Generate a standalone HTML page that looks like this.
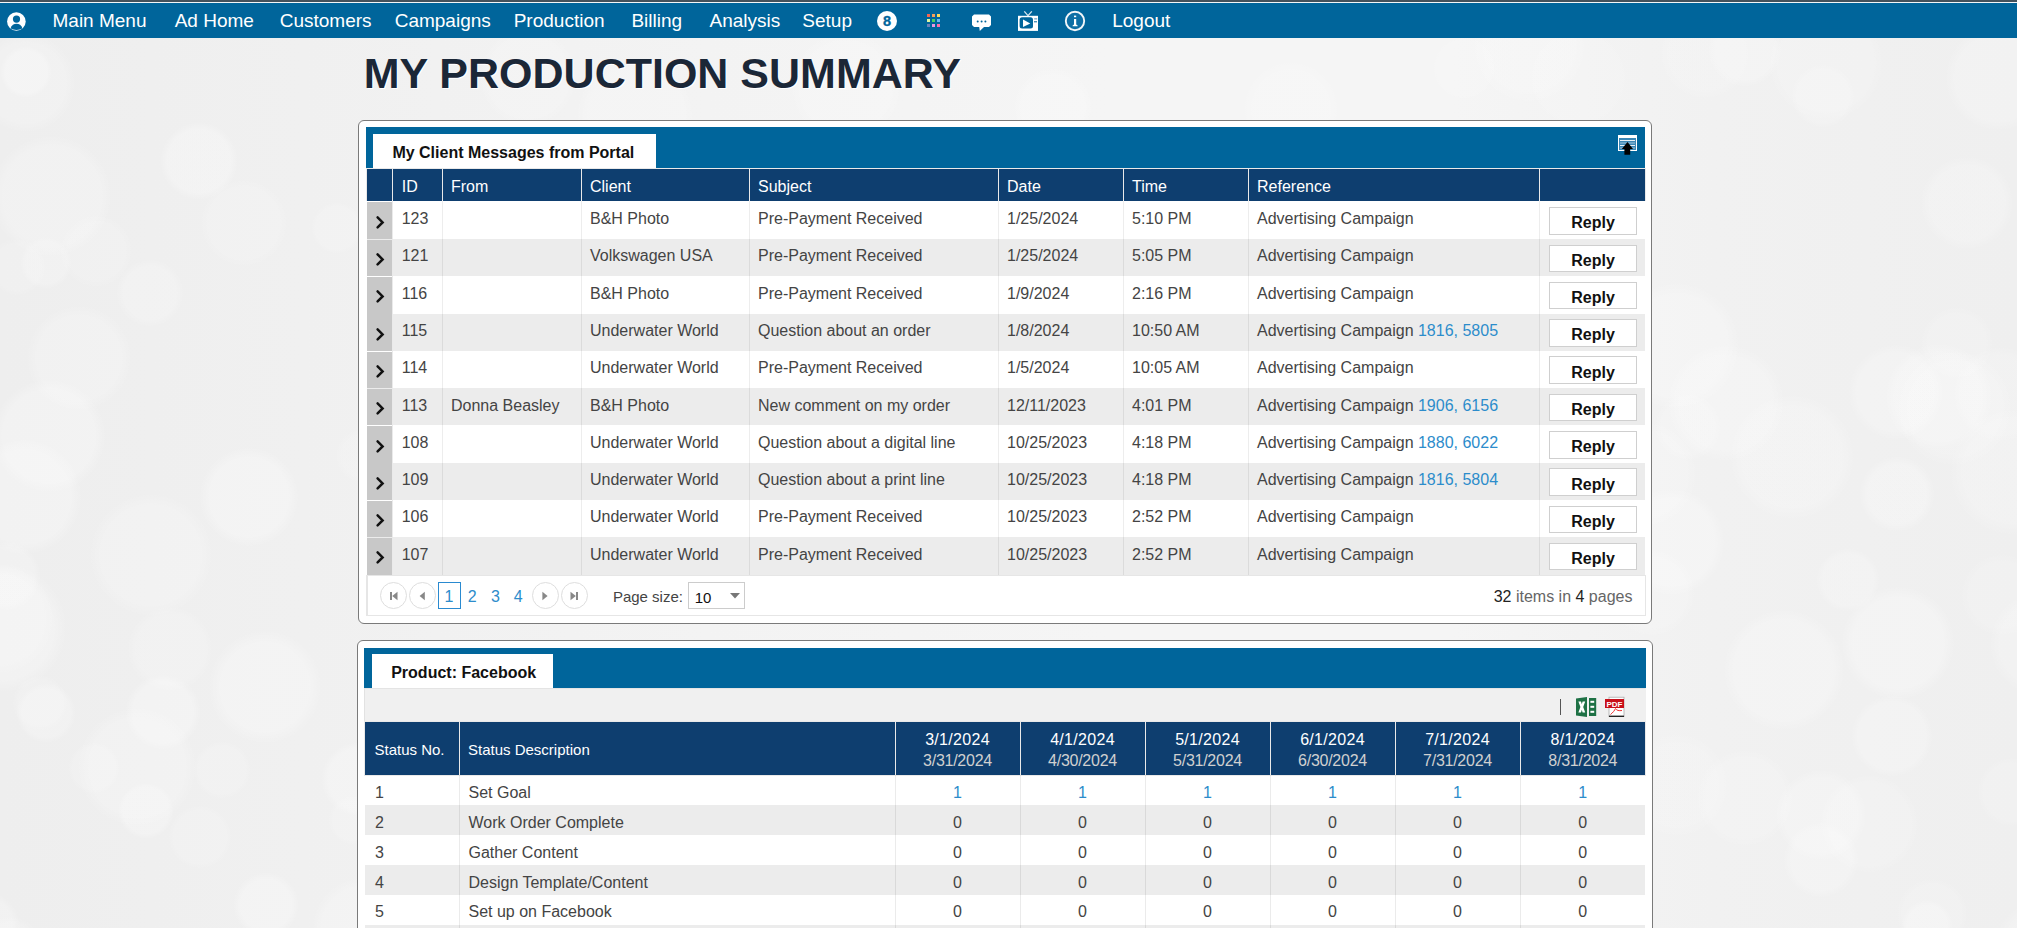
<!DOCTYPE html>
<html><head><meta charset="utf-8"><title>My Production Summary</title>
<style>
html,body{margin:0;padding:0;}
body{width:2017px;height:928px;overflow:hidden;position:relative;font-family:'Liberation Sans', sans-serif;
background-color:#efefef;
background-image:radial-gradient(circle at 151px 555px, rgba(255,255,255,0.19) 0, rgba(255,255,255,0.19) 50px, rgba(255,255,255,0) 62px),
radial-gradient(circle at 1848px 580px, rgba(255,255,255,0.19) 0, rgba(255,255,255,0.19) 26px, rgba(255,255,255,0) 32px),
radial-gradient(circle at 222px 770px, rgba(255,255,255,0.16) 0, rgba(255,255,255,0.16) 23px, rgba(255,255,255,0) 29px),
radial-gradient(circle at 1677px 785px, rgba(255,255,255,0.13) 0, rgba(255,255,255,0.13) 42px, rgba(255,255,255,0) 53px),
radial-gradient(circle at 363px 928px, rgba(255,255,255,0.21) 0, rgba(255,255,255,0.21) 41px, rgba(255,255,255,0) 51px),
radial-gradient(circle at 1705px 54px, rgba(255,255,255,0.13) 0, rgba(255,255,255,0.13) 37px, rgba(255,255,255,0) 46px),
radial-gradient(circle at 46px 263px, rgba(255,255,255,0.18) 0, rgba(255,255,255,0.18) 21px, rgba(255,255,255,0) 26px),
radial-gradient(circle at 1821px 815px, rgba(255,255,255,0.21) 0, rgba(255,255,255,0.21) 37px, rgba(255,255,255,0) 46px),
radial-gradient(circle at 170px 649px, rgba(255,255,255,0.16) 0, rgba(255,255,255,0.16) 35px, rgba(255,255,255,0) 43px),
radial-gradient(circle at 2049px 956px, rgba(255,255,255,0.22) 0, rgba(255,255,255,0.22) 47px, rgba(255,255,255,0) 59px),
radial-gradient(circle at 96px 251px, rgba(255,255,255,0.13) 0, rgba(255,255,255,0.13) 29px, rgba(255,255,255,0) 37px),
radial-gradient(circle at 1954px 408px, rgba(255,255,255,0.17) 0, rgba(255,255,255,0.17) 47px, rgba(255,255,255,0) 59px),
radial-gradient(circle at 353px 820px, rgba(255,255,255,0.15) 0, rgba(255,255,255,0.15) 20px, rgba(255,255,255,0) 25px),
radial-gradient(circle at 2013px 472px, rgba(255,255,255,0.18) 0, rgba(255,255,255,0.18) 51px, rgba(255,255,255,0) 64px),
radial-gradient(circle at -1px 619px, rgba(255,255,255,0.16) 0, rgba(255,255,255,0.16) 45px, rgba(255,255,255,0) 56px),
radial-gradient(circle at 1676px 346px, rgba(255,255,255,0.23) 0, rgba(255,255,255,0.23) 51px, rgba(255,255,255,0) 64px),
radial-gradient(circle at 17px 267px, rgba(255,255,255,0.13) 0, rgba(255,255,255,0.13) 23px, rgba(255,255,255,0) 29px),
radial-gradient(circle at 1967px 203px, rgba(255,255,255,0.18) 0, rgba(255,255,255,0.18) 38px, rgba(255,255,255,0) 47px),
radial-gradient(circle at 46px 713px, rgba(255,255,255,0.21) 0, rgba(255,255,255,0.21) 24px, rgba(255,255,255,0) 30px),
radial-gradient(circle at 1688px 427px, rgba(255,255,255,0.16) 0, rgba(255,255,255,0.16) 27px, rgba(255,255,255,0) 34px),
radial-gradient(circle at 358px 779px, rgba(255,255,255,0.24) 0, rgba(255,255,255,0.24) 30px, rgba(255,255,255,0) 37px),
radial-gradient(circle at 1726px 403px, rgba(255,255,255,0.21) 0, rgba(255,255,255,0.21) 47px, rgba(255,255,255,0) 59px),
radial-gradient(circle at 10px 950px, rgba(255,255,255,0.16) 0, rgba(255,255,255,0.16) 27px, rgba(255,255,255,0) 34px),
radial-gradient(circle at 1957px 343px, rgba(255,255,255,0.13) 0, rgba(255,255,255,0.13) 29px, rgba(255,255,255,0) 37px),
radial-gradient(circle at 6px 576px, rgba(255,255,255,0.20) 0, rgba(255,255,255,0.20) 28px, rgba(255,255,255,0) 35px),
radial-gradient(circle at 1792px 457px, rgba(255,255,255,0.19) 0, rgba(255,255,255,0.19) 51px, rgba(255,255,255,0) 63px),
radial-gradient(circle at 200px 837px, rgba(255,255,255,0.14) 0, rgba(255,255,255,0.14) 26px, rgba(255,255,255,0) 32px),
radial-gradient(circle at 2012px 792px, rgba(255,255,255,0.15) 0, rgba(255,255,255,0.15) 28px, rgba(255,255,255,0) 35px),
radial-gradient(circle at 266px 905px, rgba(255,255,255,0.25) 0, rgba(255,255,255,0.25) 26px, rgba(255,255,255,0) 33px),
radial-gradient(circle at 2002px 595px, rgba(255,255,255,0.13) 0, rgba(255,255,255,0.13) 33px, rgba(255,255,255,0) 42px),
radial-gradient(circle at -15px 926px, rgba(255,255,255,0.22) 0, rgba(255,255,255,0.22) 28px, rgba(255,255,255,0) 35px),
radial-gradient(circle at 1745px 798px, rgba(255,255,255,0.16) 0, rgba(255,255,255,0.16) 39px, rgba(255,255,255,0) 49px),
radial-gradient(circle at 40px 703px, rgba(255,255,255,0.15) 0, rgba(255,255,255,0.15) 22px, rgba(255,255,255,0) 28px),
radial-gradient(circle at 1869px 824px, rgba(255,255,255,0.16) 0, rgba(255,255,255,0.16) 40px, rgba(255,255,255,0) 50px),
radial-gradient(circle at 337px 228px, rgba(255,255,255,0.16) 0, rgba(255,255,255,0.16) 21px, rgba(255,255,255,0) 26px),
radial-gradient(circle at 1823px 96px, rgba(255,255,255,0.17) 0, rgba(255,255,255,0.17) 26px, rgba(255,255,255,0) 32px),
radial-gradient(circle at 199px 161px, rgba(255,255,255,0.24) 0, rgba(255,255,255,0.24) 32px, rgba(255,255,255,0) 39px),
radial-gradient(circle at 2042px 644px, rgba(255,255,255,0.20) 0, rgba(255,255,255,0.20) 42px, rgba(255,255,255,0) 53px),
radial-gradient(circle at 26px 72px, rgba(255,255,255,0.25) 0, rgba(255,255,255,0.25) 21px, rgba(255,255,255,0) 26px),
radial-gradient(circle at 1927px 926px, rgba(255,255,255,0.21) 0, rgba(255,255,255,0.21) 21px, rgba(255,255,255,0) 26px),
radial-gradient(circle at 163px 712px, rgba(255,255,255,0.26) 0, rgba(255,255,255,0.26) 30px, rgba(255,255,255,0) 38px),
radial-gradient(circle at 1671px 542px, rgba(255,255,255,0.25) 0, rgba(255,255,255,0.25) 44px, rgba(255,255,255,0) 54px),
radial-gradient(circle at 265px 687px, rgba(255,255,255,0.25) 0, rgba(255,255,255,0.25) 45px, rgba(255,255,255,0) 57px),
radial-gradient(circle at 1784px 670px, rgba(255,255,255,0.24) 0, rgba(255,255,255,0.24) 49px, rgba(255,255,255,0) 61px),
radial-gradient(circle at 137px 767px, rgba(255,255,255,0.20) 0, rgba(255,255,255,0.20) 48px, rgba(255,255,255,0) 60px),
radial-gradient(circle at 1896px 392px, rgba(255,255,255,0.21) 0, rgba(255,255,255,0.21) 39px, rgba(255,255,255,0) 48px),
radial-gradient(circle at 2px 628px, rgba(255,255,255,0.24) 0, rgba(255,255,255,0.24) 52px, rgba(255,255,255,0) 65px),
radial-gradient(circle at 1939px 397px, rgba(255,255,255,0.20) 0, rgba(255,255,255,0.20) 44px, rgba(255,255,255,0) 54px),
radial-gradient(circle at 146px 811px, rgba(255,255,255,0.23) 0, rgba(255,255,255,0.23) 23px, rgba(255,255,255,0) 28px),
radial-gradient(circle at 1652px 593px, rgba(255,255,255,0.15) 0, rgba(255,255,255,0.15) 35px, rgba(255,255,255,0) 44px),
radial-gradient(circle at 249px 497px, rgba(255,255,255,0.25) 0, rgba(255,255,255,0.25) 40px, rgba(255,255,255,0) 50px),
radial-gradient(circle at 1745px 50px, rgba(255,255,255,0.21) 0, rgba(255,255,255,0.21) 30px, rgba(255,255,255,0) 37px),
radial-gradient(circle at 51px 196px, rgba(255,255,255,0.21) 0, rgba(255,255,255,0.21) 49px, rgba(255,255,255,0) 61px),
radial-gradient(circle at 1821px 860px, rgba(255,255,255,0.21) 0, rgba(255,255,255,0.21) 30px, rgba(255,255,255,0) 38px),
radial-gradient(circle at 49px 436px, rgba(255,255,255,0.25) 0, rgba(255,255,255,0.25) 46px, rgba(255,255,255,0) 57px),
radial-gradient(circle at 2001px 394px, rgba(255,255,255,0.16) 0, rgba(255,255,255,0.16) 39px, rgba(255,255,255,0) 48px),
radial-gradient(circle at 24px 497px, rgba(255,255,255,0.24) 0, rgba(255,255,255,0.24) 47px, rgba(255,255,255,0) 58px),
radial-gradient(circle at 1932px 914px, rgba(255,255,255,0.14) 0, rgba(255,255,255,0.14) 29px, rgba(255,255,255,0) 36px),
radial-gradient(circle at 150px 293px, rgba(255,255,255,0.18) 0, rgba(255,255,255,0.18) 27px, rgba(255,255,255,0) 34px),
radial-gradient(circle at 1897px 494px, rgba(255,255,255,0.24) 0, rgba(255,255,255,0.24) 30px, rgba(255,255,255,0) 38px),
radial-gradient(circle at 363px 456px, rgba(255,255,255,0.12) 0, rgba(255,255,255,0.12) 22px, rgba(255,255,255,0) 28px),
radial-gradient(circle at 1998px 78px, rgba(255,255,255,0.20) 0, rgba(255,255,255,0.20) 43px, rgba(255,255,255,0) 53px),
radial-gradient(circle at 94px 768px, rgba(255,255,255,0.14) 0, rgba(255,255,255,0.14) 21px, rgba(255,255,255,0) 26px),
radial-gradient(circle at 1826px 63px, rgba(255,255,255,0.15) 0, rgba(255,255,255,0.15) 47px, rgba(255,255,255,0) 58px),
radial-gradient(circle at 26px 83px, rgba(255,255,255,0.18) 0, rgba(255,255,255,0.18) 40px, rgba(255,255,255,0) 50px),
radial-gradient(circle at 1898px 643px, rgba(255,255,255,0.25) 0, rgba(255,255,255,0.25) 46px, rgba(255,255,255,0) 57px),
radial-gradient(circle at 244px 223px, rgba(255,255,255,0.15) 0, rgba(255,255,255,0.15) 35px, rgba(255,255,255,0) 44px),
radial-gradient(circle at 1644px 474px, rgba(255,255,255,0.15) 0, rgba(255,255,255,0.15) 43px, rgba(255,255,255,0) 54px),
radial-gradient(circle at 79px 358px, rgba(255,255,255,0.19) 0, rgba(255,255,255,0.19) 42px, rgba(255,255,255,0) 53px),
radial-gradient(circle at 1892px 736px, rgba(255,255,255,0.23) 0, rgba(255,255,255,0.23) 33px, rgba(255,255,255,0) 41px),
radial-gradient(circle at 1529px 46px, rgba(255,255,255,0.17) 0, rgba(255,255,255,0.17) 46px, rgba(255,255,255,0) 58px),
radial-gradient(circle at 528px 77px, rgba(255,255,255,0.19) 0, rgba(255,255,255,0.19) 39px, rgba(255,255,255,0) 49px),
radial-gradient(circle at 846px 87px, rgba(255,255,255,0.18) 0, rgba(255,255,255,0.18) 45px, rgba(255,255,255,0) 56px),
radial-gradient(circle at 1578px 78px, rgba(255,255,255,0.12) 0, rgba(255,255,255,0.12) 40px, rgba(255,255,255,0) 50px),
radial-gradient(circle at 1291px 109px, rgba(255,255,255,0.17) 0, rgba(255,255,255,0.17) 39px, rgba(255,255,255,0) 49px),
radial-gradient(circle at 635px 116px, rgba(255,255,255,0.20) 0, rgba(255,255,255,0.20) 48px, rgba(255,255,255,0) 59px),
radial-gradient(circle at 1053px 107px, rgba(255,255,255,0.19) 0, rgba(255,255,255,0.19) 32px, rgba(255,255,255,0) 40px),
radial-gradient(circle at 1464px 68px, rgba(255,255,255,0.14) 0, rgba(255,255,255,0.14) 26px, rgba(255,255,255,0) 32px),
linear-gradient(90deg, #eeeeee 0%, #f0f0f0 15%, #f3f3f3 35%, #f5f5f5 55%, #f5f5f5 72%, #f1f1f1 85%, #efefef 100%);
}
.t{position:absolute;white-space:pre;font-family:'Liberation Sans', sans-serif;}
.b{position:absolute;}
svg.b{overflow:visible}
</style></head><body>
<div class="b" style="left:0.0px;top:0.0px;width:2017.0px;height:2.0px;background:#44525c"></div>
<div class="b" style="left:0.0px;top:2.0px;width:2017.0px;height:1.0px;background:#f4f6f8"></div>
<div class="b" style="left:0.0px;top:3.0px;width:2017.0px;height:35.0px;background:#00659b"></div>
<svg class="b" style="left:6px;top:11px" width="21" height="21" viewBox="0 0 21 21">
<circle cx="10.4" cy="10.5" r="9.3" fill="#fff"/>
<circle cx="10.5" cy="8.1" r="3.6" fill="#00659b"/>
<path d="M4.6 17.2 C5.6 14.2 7.8 12.8 10.5 12.8 C13.2 12.8 15.4 14.2 16.4 17.2 C14.8 18.4 12.8 18.9 10.5 18.9 C8.2 18.9 6.2 18.4 4.6 17.2 Z" fill="#00659b"/>
</svg>
<div class="t" style="left:52.5px;top:11.0px;font-size:19px;line-height:19px;font-weight:400;color:#fff;">Main Menu</div>
<div class="t" style="left:174.7px;top:11.0px;font-size:19px;line-height:19px;font-weight:400;color:#fff;">Ad Home</div>
<div class="t" style="left:279.7px;top:11.0px;font-size:19px;line-height:19px;font-weight:400;color:#fff;">Customers</div>
<div class="t" style="left:394.7px;top:11.0px;font-size:19px;line-height:19px;font-weight:400;color:#fff;">Campaigns</div>
<div class="t" style="left:513.7px;top:11.0px;font-size:19px;line-height:19px;font-weight:400;color:#fff;">Production</div>
<div class="t" style="left:631.4px;top:11.0px;font-size:19px;line-height:19px;font-weight:400;color:#fff;">Billing</div>
<div class="t" style="left:709.5px;top:11.0px;font-size:19px;line-height:19px;font-weight:400;color:#fff;">Analysis</div>
<div class="t" style="left:802.3px;top:11.0px;font-size:19px;line-height:19px;font-weight:400;color:#fff;">Setup</div>
<div class="t" style="left:1112.2px;top:11.0px;font-size:19px;line-height:19px;font-weight:400;color:#fff;">Logout</div>
<svg class="b" style="left:876px;top:10px" width="22" height="22" viewBox="0 0 22 22">
<circle cx="11" cy="11" r="10" fill="#fff"/>
<text x="11" y="16.4" text-anchor="middle" font-family="Liberation Sans" font-weight="700" font-size="14.5" fill="#00659b" stroke="#00659b" stroke-width="0.3">8</text>
</svg>
<div class="b" style="left:927.0px;top:14.0px;width:3.0px;height:3.0px;background:#f56650"></div>
<div class="b" style="left:932.0px;top:14.0px;width:3.0px;height:3.0px;background:#f5a05a"></div>
<div class="b" style="left:937.0px;top:14.0px;width:3.0px;height:3.0px;background:#ffd95a"></div>
<div class="b" style="left:927.0px;top:19.0px;width:3.0px;height:3.0px;background:#def5a0"></div>
<div class="b" style="left:932.0px;top:19.0px;width:3.0px;height:3.0px;background:#50d060"></div>
<div class="b" style="left:937.0px;top:19.0px;width:3.0px;height:3.0px;background:#6ab8f0"></div>
<div class="b" style="left:927.0px;top:24.0px;width:3.0px;height:3.0px;background:#6a80b8"></div>
<div class="b" style="left:932.0px;top:24.0px;width:3.0px;height:3.0px;background:#e898e0"></div>
<div class="b" style="left:937.0px;top:24.0px;width:3.0px;height:3.0px;background:#ff70a8"></div>
<svg class="b" style="left:970px;top:12px" width="24" height="22" viewBox="0 0 24 22">
<path d="M4 2.6 H19 L21 4.6 V13 L19 15 H14 L9.8 18.9 L9.2 15 H4 L2 13 V4.6 Z" fill="#fff"/>
<circle cx="7.7" cy="9.6" r="1" fill="#00659b"/><circle cx="11.6" cy="9.6" r="1" fill="#00659b"/><circle cx="15.4" cy="9.6" r="1" fill="#00659b"/>
</svg>
<svg class="b" style="left:1016px;top:9px" width="24" height="24" viewBox="0 0 24 24">
<path d="M8.3 2.4 L12 6.6 L15.8 2.4" stroke="#fff" stroke-width="1.3" fill="none" opacity="0.85"/>
<rect x="2" y="6.8" width="20" height="15.1" fill="#fff"/>
<rect x="3.6" y="8.2" width="13.4" height="11.3" rx="2.5" fill="#00659b"/>
<path d="M7 10.6 L14.3 14.4 L7 18 Z" fill="#fff"/>
<rect x="18.2" y="9" width="3" height="1.6" fill="#8fb8d6"/>
<rect x="18" y="12.3" width="3" height="1" fill="#00659b"/>
</svg>
<svg class="b" style="left:1064px;top:10px" width="22" height="22" viewBox="0 0 22 22">
<circle cx="11" cy="11" r="9.2" fill="#0e6fa5" stroke="#f2f6f9" stroke-width="1.9"/>
<rect x="10" y="5.6" width="2.2" height="1.6" fill="#fff"/>
<path d="M10 9 H12.2 V14.6 L13.6 15.6 V16.3 H8.6 V15.6 L10 14.6 Z" fill="#fff"/>
</svg>
<div class="t" style="left:363.7px;top:52.0px;font-size:43px;line-height:43px;font-weight:700;color:#1b2737;text-shadow:1px 1px 0 #fff;">MY PRODUCTION SUMMARY</div>
<div class="b" style="left:358.0px;top:120.0px;width:1294.0px;height:504.0px;background:#fff;border:1px solid #7a7a7a;border-radius:6px;box-sizing:border-box"></div>
<div class="b" style="left:366.0px;top:127.0px;width:1279.0px;height:41.0px;background:#00659b"></div>
<div class="b" style="left:373.0px;top:134.0px;width:283.0px;height:34.0px;background:#fff"></div>
<div class="t" style="left:392.4px;top:145.0px;font-size:16px;line-height:16px;font-weight:700;color:#111;">My Client Messages from Portal</div>
<svg class="b" style="left:1617px;top:134px" width="22" height="22" viewBox="0 0 22 22">
<rect x="1" y="1" width="19" height="16" fill="#fff"/>
<rect x="2" y="4" width="17" height="12" fill="#3a86b5"/>
<rect x="3" y="6" width="15" height="1" fill="#e8f1f7"/>
<rect x="3" y="8.5" width="15" height="1" fill="#9ec3dc"/>
<rect x="3" y="11" width="15" height="1" fill="#e8f1f7"/>
<rect x="3" y="13.5" width="15" height="1" fill="#9ec3dc"/>
<path d="M10.5 8 L16 15 H13.2 V20.7 H7.4 V15 H4.8 Z" fill="#000"/>
</svg>
<div class="b" style="left:366.0px;top:168.0px;width:1280.0px;height:34.0px;background:#e9e9e9"></div>
<div class="b" style="left:367.0px;top:169.0px;width:25.0px;height:32.0px;background:#0e3e6f"></div>
<div class="b" style="left:393.0px;top:169.0px;width:49.0px;height:32.0px;background:#0e3e6f"></div>
<div class="b" style="left:443.0px;top:169.0px;width:138.0px;height:32.0px;background:#0e3e6f"></div>
<div class="b" style="left:582.0px;top:169.0px;width:167.0px;height:32.0px;background:#0e3e6f"></div>
<div class="b" style="left:750.0px;top:169.0px;width:248.0px;height:32.0px;background:#0e3e6f"></div>
<div class="b" style="left:999.0px;top:169.0px;width:124.0px;height:32.0px;background:#0e3e6f"></div>
<div class="b" style="left:1124.0px;top:169.0px;width:124.0px;height:32.0px;background:#0e3e6f"></div>
<div class="b" style="left:1249.0px;top:169.0px;width:290.0px;height:32.0px;background:#0e3e6f"></div>
<div class="b" style="left:1540.0px;top:169.0px;width:105.0px;height:32.0px;background:#0e3e6f"></div>
<div class="t" style="left:401.7px;top:179.0px;font-size:16px;line-height:16px;font-weight:400;color:#fff;">ID</div>
<div class="t" style="left:451.0px;top:179.0px;font-size:16px;line-height:16px;font-weight:400;color:#fff;">From</div>
<div class="t" style="left:590.0px;top:179.0px;font-size:16px;line-height:16px;font-weight:400;color:#fff;">Client</div>
<div class="t" style="left:758.0px;top:179.0px;font-size:16px;line-height:16px;font-weight:400;color:#fff;">Subject</div>
<div class="t" style="left:1007.0px;top:179.0px;font-size:16px;line-height:16px;font-weight:400;color:#fff;">Date</div>
<div class="t" style="left:1132.0px;top:179.0px;font-size:16px;line-height:16px;font-weight:400;color:#fff;">Time</div>
<div class="t" style="left:1257.0px;top:179.0px;font-size:16px;line-height:16px;font-weight:400;color:#fff;">Reference</div>
<div class="b" style="left:366.0px;top:201.0px;width:1280.0px;height:374.0px;background:#fff"></div>
<div class="b" style="left:367.0px;top:201.7px;width:1278.0px;height:37.3px;background:#ffffff"></div>
<div class="b" style="left:367.0px;top:202.3px;width:25.0px;height:36.7px;background:#c8c8c8"></div>
<div class="b" style="left:367.0px;top:239.0px;width:1278.0px;height:37.3px;background:#ececec"></div>
<div class="b" style="left:367.0px;top:239.6px;width:25.0px;height:36.7px;background:#c8c8c8"></div>
<div class="b" style="left:367.0px;top:276.3px;width:1278.0px;height:37.3px;background:#ffffff"></div>
<div class="b" style="left:367.0px;top:276.9px;width:25.0px;height:36.7px;background:#c8c8c8"></div>
<div class="b" style="left:367.0px;top:313.6px;width:1278.0px;height:37.3px;background:#ececec"></div>
<div class="b" style="left:367.0px;top:314.2px;width:25.0px;height:36.7px;background:#c8c8c8"></div>
<div class="b" style="left:367.0px;top:350.9px;width:1278.0px;height:37.3px;background:#ffffff"></div>
<div class="b" style="left:367.0px;top:351.5px;width:25.0px;height:36.7px;background:#c8c8c8"></div>
<div class="b" style="left:367.0px;top:388.2px;width:1278.0px;height:37.3px;background:#ececec"></div>
<div class="b" style="left:367.0px;top:388.8px;width:25.0px;height:36.7px;background:#c8c8c8"></div>
<div class="b" style="left:367.0px;top:425.5px;width:1278.0px;height:37.3px;background:#ffffff"></div>
<div class="b" style="left:367.0px;top:426.1px;width:25.0px;height:36.7px;background:#c8c8c8"></div>
<div class="b" style="left:367.0px;top:462.8px;width:1278.0px;height:37.3px;background:#ececec"></div>
<div class="b" style="left:367.0px;top:463.4px;width:25.0px;height:36.7px;background:#c8c8c8"></div>
<div class="b" style="left:367.0px;top:500.1px;width:1278.0px;height:37.3px;background:#ffffff"></div>
<div class="b" style="left:367.0px;top:500.7px;width:25.0px;height:36.7px;background:#c8c8c8"></div>
<div class="b" style="left:367.0px;top:537.4px;width:1278.0px;height:37.3px;background:#ececec"></div>
<div class="b" style="left:367.0px;top:538.0px;width:25.0px;height:36.7px;background:#c8c8c8"></div>
<div class="b" style="left:442.0px;top:201.0px;width:1.0px;height:374.0px;background:rgba(0,0,0,0.07)"></div>
<div class="b" style="left:581.0px;top:201.0px;width:1.0px;height:374.0px;background:rgba(0,0,0,0.07)"></div>
<div class="b" style="left:749.0px;top:201.0px;width:1.0px;height:374.0px;background:rgba(0,0,0,0.07)"></div>
<div class="b" style="left:998.0px;top:201.0px;width:1.0px;height:374.0px;background:rgba(0,0,0,0.07)"></div>
<div class="b" style="left:1123.0px;top:201.0px;width:1.0px;height:374.0px;background:rgba(0,0,0,0.07)"></div>
<div class="b" style="left:1248.0px;top:201.0px;width:1.0px;height:374.0px;background:rgba(0,0,0,0.07)"></div>
<div class="b" style="left:1539.0px;top:201.0px;width:1.0px;height:374.0px;background:rgba(0,0,0,0.07)"></div>
<div class="b" style="left:392.0px;top:201.0px;width:1.0px;height:374.0px;background:#eaeaea"></div>
<svg class="b" style="left:374px;top:213.7px" width="12" height="14" viewBox="0 0 12 14"><path d="M3.6 3.4 L8.6 8.4 L3.6 13.4" stroke="#111" stroke-width="2.5" fill="none" stroke-linejoin="miter" stroke-linecap="round"/></svg>
<div class="t" style="left:401.7px;top:211.0px;font-size:16px;line-height:16px;font-weight:400;color:#444444;">123</div>
<div class="t" style="left:590.0px;top:211.0px;font-size:16px;line-height:16px;font-weight:400;color:#444444;">B&amp;H Photo</div>
<div class="t" style="left:758.0px;top:211.0px;font-size:16px;line-height:16px;font-weight:400;color:#444444;">Pre-Payment Received</div>
<div class="t" style="left:1007.0px;top:211.0px;font-size:16px;line-height:16px;font-weight:400;color:#444444;">1/25/2024</div>
<div class="t" style="left:1132.0px;top:211.0px;font-size:16px;line-height:16px;font-weight:400;color:#444444;">5:10 PM</div>
<div class="t" style="left:1257.0px;top:211.0px;font-size:16px;line-height:16px;font-weight:400;color:#444444;">Advertising Campaign</div>
<div class="b" style="left:1549.0px;top:207.2px;width:88.0px;height:27.5px;background:#fff;border:1px solid #cfcfcf;box-sizing:border-box"></div>
<div class="t" style="left:1393.0px;width:400px;text-align:center;top:215.4px;font-size:16px;line-height:16px;font-weight:700;color:#111;">Reply</div>
<svg class="b" style="left:374px;top:251.0px" width="12" height="14" viewBox="0 0 12 14"><path d="M3.6 3.4 L8.6 8.4 L3.6 13.4" stroke="#111" stroke-width="2.5" fill="none" stroke-linejoin="miter" stroke-linecap="round"/></svg>
<div class="t" style="left:401.7px;top:248.3px;font-size:16px;line-height:16px;font-weight:400;color:#444444;">121</div>
<div class="t" style="left:590.0px;top:248.3px;font-size:16px;line-height:16px;font-weight:400;color:#444444;">Volkswagen USA</div>
<div class="t" style="left:758.0px;top:248.3px;font-size:16px;line-height:16px;font-weight:400;color:#444444;">Pre-Payment Received</div>
<div class="t" style="left:1007.0px;top:248.3px;font-size:16px;line-height:16px;font-weight:400;color:#444444;">1/25/2024</div>
<div class="t" style="left:1132.0px;top:248.3px;font-size:16px;line-height:16px;font-weight:400;color:#444444;">5:05 PM</div>
<div class="t" style="left:1257.0px;top:248.3px;font-size:16px;line-height:16px;font-weight:400;color:#444444;">Advertising Campaign</div>
<div class="b" style="left:1549.0px;top:244.5px;width:88.0px;height:27.5px;background:#fff;border:1px solid #cfcfcf;box-sizing:border-box"></div>
<div class="t" style="left:1393.0px;width:400px;text-align:center;top:252.7px;font-size:16px;line-height:16px;font-weight:700;color:#111;">Reply</div>
<svg class="b" style="left:374px;top:288.3px" width="12" height="14" viewBox="0 0 12 14"><path d="M3.6 3.4 L8.6 8.4 L3.6 13.4" stroke="#111" stroke-width="2.5" fill="none" stroke-linejoin="miter" stroke-linecap="round"/></svg>
<div class="t" style="left:401.7px;top:285.6px;font-size:16px;line-height:16px;font-weight:400;color:#444444;">116</div>
<div class="t" style="left:590.0px;top:285.6px;font-size:16px;line-height:16px;font-weight:400;color:#444444;">B&amp;H Photo</div>
<div class="t" style="left:758.0px;top:285.6px;font-size:16px;line-height:16px;font-weight:400;color:#444444;">Pre-Payment Received</div>
<div class="t" style="left:1007.0px;top:285.6px;font-size:16px;line-height:16px;font-weight:400;color:#444444;">1/9/2024</div>
<div class="t" style="left:1132.0px;top:285.6px;font-size:16px;line-height:16px;font-weight:400;color:#444444;">2:16 PM</div>
<div class="t" style="left:1257.0px;top:285.6px;font-size:16px;line-height:16px;font-weight:400;color:#444444;">Advertising Campaign</div>
<div class="b" style="left:1549.0px;top:281.8px;width:88.0px;height:27.5px;background:#fff;border:1px solid #cfcfcf;box-sizing:border-box"></div>
<div class="t" style="left:1393.0px;width:400px;text-align:center;top:290.0px;font-size:16px;line-height:16px;font-weight:700;color:#111;">Reply</div>
<svg class="b" style="left:374px;top:325.6px" width="12" height="14" viewBox="0 0 12 14"><path d="M3.6 3.4 L8.6 8.4 L3.6 13.4" stroke="#111" stroke-width="2.5" fill="none" stroke-linejoin="miter" stroke-linecap="round"/></svg>
<div class="t" style="left:401.7px;top:322.9px;font-size:16px;line-height:16px;font-weight:400;color:#444444;">115</div>
<div class="t" style="left:590.0px;top:322.9px;font-size:16px;line-height:16px;font-weight:400;color:#444444;">Underwater World</div>
<div class="t" style="left:758.0px;top:322.9px;font-size:16px;line-height:16px;font-weight:400;color:#444444;">Question about an order</div>
<div class="t" style="left:1007.0px;top:322.9px;font-size:16px;line-height:16px;font-weight:400;color:#444444;">1/8/2024</div>
<div class="t" style="left:1132.0px;top:322.9px;font-size:16px;line-height:16px;font-weight:400;color:#444444;">10:50 AM</div>
<div class="t" style="left:1257.0px;top:322.9px;font-size:16px;line-height:16px;font-weight:400;color:#444444;">Advertising Campaign <span style="color:#2c8ccb">1816, 5805</span></div>
<div class="b" style="left:1549.0px;top:319.1px;width:88.0px;height:27.5px;background:#fff;border:1px solid #cfcfcf;box-sizing:border-box"></div>
<div class="t" style="left:1393.0px;width:400px;text-align:center;top:327.3px;font-size:16px;line-height:16px;font-weight:700;color:#111;">Reply</div>
<svg class="b" style="left:374px;top:362.9px" width="12" height="14" viewBox="0 0 12 14"><path d="M3.6 3.4 L8.6 8.4 L3.6 13.4" stroke="#111" stroke-width="2.5" fill="none" stroke-linejoin="miter" stroke-linecap="round"/></svg>
<div class="t" style="left:401.7px;top:360.2px;font-size:16px;line-height:16px;font-weight:400;color:#444444;">114</div>
<div class="t" style="left:590.0px;top:360.2px;font-size:16px;line-height:16px;font-weight:400;color:#444444;">Underwater World</div>
<div class="t" style="left:758.0px;top:360.2px;font-size:16px;line-height:16px;font-weight:400;color:#444444;">Pre-Payment Received</div>
<div class="t" style="left:1007.0px;top:360.2px;font-size:16px;line-height:16px;font-weight:400;color:#444444;">1/5/2024</div>
<div class="t" style="left:1132.0px;top:360.2px;font-size:16px;line-height:16px;font-weight:400;color:#444444;">10:05 AM</div>
<div class="t" style="left:1257.0px;top:360.2px;font-size:16px;line-height:16px;font-weight:400;color:#444444;">Advertising Campaign</div>
<div class="b" style="left:1549.0px;top:356.4px;width:88.0px;height:27.5px;background:#fff;border:1px solid #cfcfcf;box-sizing:border-box"></div>
<div class="t" style="left:1393.0px;width:400px;text-align:center;top:364.6px;font-size:16px;line-height:16px;font-weight:700;color:#111;">Reply</div>
<svg class="b" style="left:374px;top:400.2px" width="12" height="14" viewBox="0 0 12 14"><path d="M3.6 3.4 L8.6 8.4 L3.6 13.4" stroke="#111" stroke-width="2.5" fill="none" stroke-linejoin="miter" stroke-linecap="round"/></svg>
<div class="t" style="left:401.7px;top:397.5px;font-size:16px;line-height:16px;font-weight:400;color:#444444;">113</div>
<div class="t" style="left:451.0px;top:397.5px;font-size:16px;line-height:16px;font-weight:400;color:#444444;">Donna Beasley</div>
<div class="t" style="left:590.0px;top:397.5px;font-size:16px;line-height:16px;font-weight:400;color:#444444;">B&amp;H Photo</div>
<div class="t" style="left:758.0px;top:397.5px;font-size:16px;line-height:16px;font-weight:400;color:#444444;">New comment on my order</div>
<div class="t" style="left:1007.0px;top:397.5px;font-size:16px;line-height:16px;font-weight:400;color:#444444;">12/11/2023</div>
<div class="t" style="left:1132.0px;top:397.5px;font-size:16px;line-height:16px;font-weight:400;color:#444444;">4:01 PM</div>
<div class="t" style="left:1257.0px;top:397.5px;font-size:16px;line-height:16px;font-weight:400;color:#444444;">Advertising Campaign <span style="color:#2c8ccb">1906, 6156</span></div>
<div class="b" style="left:1549.0px;top:393.7px;width:88.0px;height:27.5px;background:#fff;border:1px solid #cfcfcf;box-sizing:border-box"></div>
<div class="t" style="left:1393.0px;width:400px;text-align:center;top:401.9px;font-size:16px;line-height:16px;font-weight:700;color:#111;">Reply</div>
<svg class="b" style="left:374px;top:437.5px" width="12" height="14" viewBox="0 0 12 14"><path d="M3.6 3.4 L8.6 8.4 L3.6 13.4" stroke="#111" stroke-width="2.5" fill="none" stroke-linejoin="miter" stroke-linecap="round"/></svg>
<div class="t" style="left:401.7px;top:434.8px;font-size:16px;line-height:16px;font-weight:400;color:#444444;">108</div>
<div class="t" style="left:590.0px;top:434.8px;font-size:16px;line-height:16px;font-weight:400;color:#444444;">Underwater World</div>
<div class="t" style="left:758.0px;top:434.8px;font-size:16px;line-height:16px;font-weight:400;color:#444444;">Question about a digital line</div>
<div class="t" style="left:1007.0px;top:434.8px;font-size:16px;line-height:16px;font-weight:400;color:#444444;">10/25/2023</div>
<div class="t" style="left:1132.0px;top:434.8px;font-size:16px;line-height:16px;font-weight:400;color:#444444;">4:18 PM</div>
<div class="t" style="left:1257.0px;top:434.8px;font-size:16px;line-height:16px;font-weight:400;color:#444444;">Advertising Campaign <span style="color:#2c8ccb">1880, 6022</span></div>
<div class="b" style="left:1549.0px;top:431.0px;width:88.0px;height:27.5px;background:#fff;border:1px solid #cfcfcf;box-sizing:border-box"></div>
<div class="t" style="left:1393.0px;width:400px;text-align:center;top:439.2px;font-size:16px;line-height:16px;font-weight:700;color:#111;">Reply</div>
<svg class="b" style="left:374px;top:474.8px" width="12" height="14" viewBox="0 0 12 14"><path d="M3.6 3.4 L8.6 8.4 L3.6 13.4" stroke="#111" stroke-width="2.5" fill="none" stroke-linejoin="miter" stroke-linecap="round"/></svg>
<div class="t" style="left:401.7px;top:472.1px;font-size:16px;line-height:16px;font-weight:400;color:#444444;">109</div>
<div class="t" style="left:590.0px;top:472.1px;font-size:16px;line-height:16px;font-weight:400;color:#444444;">Underwater World</div>
<div class="t" style="left:758.0px;top:472.1px;font-size:16px;line-height:16px;font-weight:400;color:#444444;">Question about a print line</div>
<div class="t" style="left:1007.0px;top:472.1px;font-size:16px;line-height:16px;font-weight:400;color:#444444;">10/25/2023</div>
<div class="t" style="left:1132.0px;top:472.1px;font-size:16px;line-height:16px;font-weight:400;color:#444444;">4:18 PM</div>
<div class="t" style="left:1257.0px;top:472.1px;font-size:16px;line-height:16px;font-weight:400;color:#444444;">Advertising Campaign <span style="color:#2c8ccb">1816, 5804</span></div>
<div class="b" style="left:1549.0px;top:468.3px;width:88.0px;height:27.5px;background:#fff;border:1px solid #cfcfcf;box-sizing:border-box"></div>
<div class="t" style="left:1393.0px;width:400px;text-align:center;top:476.5px;font-size:16px;line-height:16px;font-weight:700;color:#111;">Reply</div>
<svg class="b" style="left:374px;top:512.1px" width="12" height="14" viewBox="0 0 12 14"><path d="M3.6 3.4 L8.6 8.4 L3.6 13.4" stroke="#111" stroke-width="2.5" fill="none" stroke-linejoin="miter" stroke-linecap="round"/></svg>
<div class="t" style="left:401.7px;top:509.4px;font-size:16px;line-height:16px;font-weight:400;color:#444444;">106</div>
<div class="t" style="left:590.0px;top:509.4px;font-size:16px;line-height:16px;font-weight:400;color:#444444;">Underwater World</div>
<div class="t" style="left:758.0px;top:509.4px;font-size:16px;line-height:16px;font-weight:400;color:#444444;">Pre-Payment Received</div>
<div class="t" style="left:1007.0px;top:509.4px;font-size:16px;line-height:16px;font-weight:400;color:#444444;">10/25/2023</div>
<div class="t" style="left:1132.0px;top:509.4px;font-size:16px;line-height:16px;font-weight:400;color:#444444;">2:52 PM</div>
<div class="t" style="left:1257.0px;top:509.4px;font-size:16px;line-height:16px;font-weight:400;color:#444444;">Advertising Campaign</div>
<div class="b" style="left:1549.0px;top:505.6px;width:88.0px;height:27.5px;background:#fff;border:1px solid #cfcfcf;box-sizing:border-box"></div>
<div class="t" style="left:1393.0px;width:400px;text-align:center;top:513.8px;font-size:16px;line-height:16px;font-weight:700;color:#111;">Reply</div>
<svg class="b" style="left:374px;top:549.4px" width="12" height="14" viewBox="0 0 12 14"><path d="M3.6 3.4 L8.6 8.4 L3.6 13.4" stroke="#111" stroke-width="2.5" fill="none" stroke-linejoin="miter" stroke-linecap="round"/></svg>
<div class="t" style="left:401.7px;top:546.7px;font-size:16px;line-height:16px;font-weight:400;color:#444444;">107</div>
<div class="t" style="left:590.0px;top:546.7px;font-size:16px;line-height:16px;font-weight:400;color:#444444;">Underwater World</div>
<div class="t" style="left:758.0px;top:546.7px;font-size:16px;line-height:16px;font-weight:400;color:#444444;">Pre-Payment Received</div>
<div class="t" style="left:1007.0px;top:546.7px;font-size:16px;line-height:16px;font-weight:400;color:#444444;">10/25/2023</div>
<div class="t" style="left:1132.0px;top:546.7px;font-size:16px;line-height:16px;font-weight:400;color:#444444;">2:52 PM</div>
<div class="t" style="left:1257.0px;top:546.7px;font-size:16px;line-height:16px;font-weight:400;color:#444444;">Advertising Campaign</div>
<div class="b" style="left:1549.0px;top:542.9px;width:88.0px;height:27.5px;background:#fff;border:1px solid #cfcfcf;box-sizing:border-box"></div>
<div class="t" style="left:1393.0px;width:400px;text-align:center;top:551.1px;font-size:16px;line-height:16px;font-weight:700;color:#111;">Reply</div>
<div class="b" style="left:366.0px;top:574.7px;width:1280.0px;height:41.3px;background:#e6e6e6"></div>
<div class="b" style="left:368.0px;top:576.0px;width:1277.0px;height:38.5px;background:#fff"></div>
<div class="b" style="left:380.2px;top:582.3px;width:27.0px;height:27.0px;border:1px solid #dedede;border-radius:50%;box-sizing:border-box;background:#fff"></div>
<div class="b" style="left:408.5px;top:582.3px;width:27.0px;height:27.0px;border:1px solid #dedede;border-radius:50%;box-sizing:border-box;background:#fff"></div>
<div class="b" style="left:531.7px;top:582.3px;width:27.0px;height:27.0px;border:1px solid #dedede;border-radius:50%;box-sizing:border-box;background:#fff"></div>
<div class="b" style="left:560.9px;top:582.3px;width:27.0px;height:27.0px;border:1px solid #dedede;border-radius:50%;box-sizing:border-box;background:#fff"></div>
<svg class="b" style="left:386px;top:589px" width="16" height="14" viewBox="0 0 16 14"><rect x="4" y="3" width="2" height="8" fill="#888"/><path d="M11.5 2.8 V11.2 L6.2 7 Z" fill="#888"/></svg>
<svg class="b" style="left:414px;top:589px" width="16" height="14" viewBox="0 0 16 14"><path d="M10.8 2.8 V11.2 L5.6 7 Z" fill="#888"/></svg>
<svg class="b" style="left:537px;top:589px" width="16" height="14" viewBox="0 0 16 14"><path d="M5.4 2.8 V11.2 L10.6 7 Z" fill="#888"/></svg>
<svg class="b" style="left:566px;top:589px" width="16" height="14" viewBox="0 0 16 14"><path d="M4.5 2.8 V11.2 L9.8 7 Z" fill="#888"/><rect x="10" y="3" width="2" height="8" fill="#888"/></svg>
<div class="b" style="left:438.0px;top:582.0px;width:23.0px;height:27.0px;border:1.5px solid #2a8ad0;box-sizing:border-box"></div>
<div class="t" style="left:444.5px;top:589.0px;font-size:16px;line-height:16px;font-weight:400;color:#2c8ccb;">1</div>
<div class="t" style="left:467.7px;top:589.0px;font-size:16px;line-height:16px;font-weight:400;color:#2c8ccb;">2</div>
<div class="t" style="left:491.0px;top:589.0px;font-size:16px;line-height:16px;font-weight:400;color:#2c8ccb;">3</div>
<div class="t" style="left:513.8px;top:589.0px;font-size:16px;line-height:16px;font-weight:400;color:#2c8ccb;">4</div>
<div class="t" style="left:612.9px;top:589.0px;font-size:15px;line-height:15px;font-weight:400;color:#444;">Page size:</div>
<div class="b" style="left:688.0px;top:582.0px;width:57.0px;height:27.0px;border:1px solid #cccccc;box-sizing:border-box;background:#fff"></div>
<div class="t" style="left:694.7px;top:589.7px;font-size:15px;line-height:15px;font-weight:400;color:#111;">10</div>
<svg class="b" style="left:729px;top:592px" width="12" height="8" viewBox="0 0 12 8"><path d="M1 1 H11 L6 6.5 Z" fill="#777"/></svg>
<div class="t" style="left:1493.7px;top:588.7px;font-size:16px;line-height:16px;font-weight:400;color:#222;">32 <span style="color:#666">items in</span> 4 <span style="color:#666">pages</span></div>
<div class="b" style="left:357.0px;top:640.0px;width:1296.0px;height:400.0px;background:#fff;border:1px solid #7a7a7a;border-radius:6px;box-sizing:border-box"></div>
<div class="b" style="left:364.0px;top:648.0px;width:1282.0px;height:40.0px;background:#00659b"></div>
<div class="b" style="left:372.0px;top:654.0px;width:181.0px;height:34.0px;background:#fff"></div>
<div class="t" style="left:391.2px;top:664.8px;font-size:16px;line-height:16px;font-weight:700;color:#111;">Product: Facebook</div>
<div class="b" style="left:364.0px;top:688.0px;width:1282.0px;height:34.0px;background:#f0f0f0"></div>
<div class="b" style="left:365.0px;top:688.0px;width:1280.0px;height:1.0px;background:#e4e4e4"></div>
<div class="b" style="left:364.0px;top:688.0px;width:1.0px;height:34.0px;background:#e2e2e2"></div>
<div class="b" style="left:1560.0px;top:699.0px;width:1.0px;height:16.0px;background:#555"></div>
<svg class="b" style="left:1575px;top:696px" width="22" height="22" viewBox="0 0 22 22">
<path d="M1 2.6 L12 1 V21 L1 19.4 Z" fill="#1e7145"/>
<rect x="14" y="2" width="7.2" height="18" fill="#1e7145"/>
<rect x="15.4" y="4.8" width="3.8" height="2" fill="#fff"/>
<rect x="15.4" y="9.8" width="3.8" height="2" fill="#fff"/>
<rect x="15.4" y="14.8" width="3.8" height="2" fill="#fff"/>
<path d="M3.4 5.6 H6 L6.8 8.2 L7.6 5.6 H10.2 L8.2 11 L10.2 16.4 H7.6 L6.8 13.8 L6 16.4 H3.4 L5.4 11 Z" fill="#fff"/>
</svg>
<svg class="b" style="left:1604px;top:696px" width="22" height="22" viewBox="0 0 22 22">
<rect x="5" y="1.2" width="15" height="19.4" fill="#fff" stroke="#aaa" stroke-width="0.8"/>
<rect x="5" y="19.6" width="15" height="1.4" fill="#222"/>
<rect x="1" y="3" width="19" height="9" fill="#c8101a"/>
<text x="10.5" y="10.6" text-anchor="middle" font-family="Liberation Sans" font-weight="700" font-size="8" fill="#fff">PDF</text>
<path d="M6.5 18.5 C9 16.5 10.5 14.5 11.5 12.5 C12.5 14.5 15 15 18 14.5" stroke="#e33" stroke-width="1" fill="none"/>
</svg>
<div class="b" style="left:364.0px;top:721.0px;width:1282.0px;height:55.0px;background:#e9e9e9"></div>
<div class="b" style="left:365.0px;top:722.0px;width:93.5px;height:53.0px;background:#0e3e6f"></div>
<div class="b" style="left:459.5px;top:722.0px;width:435.0px;height:53.0px;background:#0e3e6f"></div>
<div class="b" style="left:895.5px;top:722.0px;width:124.0px;height:53.0px;background:#0e3e6f"></div>
<div class="b" style="left:1020.5px;top:722.0px;width:124.0px;height:53.0px;background:#0e3e6f"></div>
<div class="b" style="left:1145.5px;top:722.0px;width:124.0px;height:53.0px;background:#0e3e6f"></div>
<div class="b" style="left:1270.5px;top:722.0px;width:124.0px;height:53.0px;background:#0e3e6f"></div>
<div class="b" style="left:1395.5px;top:722.0px;width:124.0px;height:53.0px;background:#0e3e6f"></div>
<div class="b" style="left:1520.5px;top:722.0px;width:124.5px;height:53.0px;background:#0e3e6f"></div>
<div class="t" style="left:374.5px;top:741.5px;font-size:15px;line-height:15px;font-weight:400;color:#fff;">Status No.</div>
<div class="t" style="left:468.0px;top:741.5px;font-size:15px;line-height:15px;font-weight:400;color:#fff;">Status Description</div>
<div class="t" style="left:757.5px;width:400px;text-align:center;top:732.2px;font-size:16px;line-height:16px;font-weight:400;color:#fff;letter-spacing:0.3px;">3/1/2024</div>
<div class="t" style="left:757.5px;width:400px;text-align:center;top:753.0px;font-size:16px;line-height:16px;font-weight:400;color:#d0d0d0;letter-spacing:-0.25px;">3/31/2024</div>
<div class="t" style="left:882.5px;width:400px;text-align:center;top:732.2px;font-size:16px;line-height:16px;font-weight:400;color:#fff;letter-spacing:0.3px;">4/1/2024</div>
<div class="t" style="left:882.5px;width:400px;text-align:center;top:753.0px;font-size:16px;line-height:16px;font-weight:400;color:#d0d0d0;letter-spacing:-0.25px;">4/30/2024</div>
<div class="t" style="left:1007.5px;width:400px;text-align:center;top:732.2px;font-size:16px;line-height:16px;font-weight:400;color:#fff;letter-spacing:0.3px;">5/1/2024</div>
<div class="t" style="left:1007.5px;width:400px;text-align:center;top:753.0px;font-size:16px;line-height:16px;font-weight:400;color:#d0d0d0;letter-spacing:-0.25px;">5/31/2024</div>
<div class="t" style="left:1132.5px;width:400px;text-align:center;top:732.2px;font-size:16px;line-height:16px;font-weight:400;color:#fff;letter-spacing:0.3px;">6/1/2024</div>
<div class="t" style="left:1132.5px;width:400px;text-align:center;top:753.0px;font-size:16px;line-height:16px;font-weight:400;color:#d0d0d0;letter-spacing:-0.25px;">6/30/2024</div>
<div class="t" style="left:1257.5px;width:400px;text-align:center;top:732.2px;font-size:16px;line-height:16px;font-weight:400;color:#fff;letter-spacing:0.3px;">7/1/2024</div>
<div class="t" style="left:1257.5px;width:400px;text-align:center;top:753.0px;font-size:16px;line-height:16px;font-weight:400;color:#d0d0d0;letter-spacing:-0.25px;">7/31/2024</div>
<div class="t" style="left:1382.8px;width:400px;text-align:center;top:732.2px;font-size:16px;line-height:16px;font-weight:400;color:#fff;letter-spacing:0.3px;">8/1/2024</div>
<div class="t" style="left:1382.8px;width:400px;text-align:center;top:753.0px;font-size:16px;line-height:16px;font-weight:400;color:#d0d0d0;letter-spacing:-0.25px;">8/31/2024</div>
<div class="b" style="left:365.0px;top:775.5px;width:1280.0px;height:29.9px;background:#ffffff"></div>
<div class="b" style="left:365.0px;top:805.4px;width:1280.0px;height:29.9px;background:#ececec"></div>
<div class="b" style="left:365.0px;top:835.2px;width:1280.0px;height:29.9px;background:#ffffff"></div>
<div class="b" style="left:365.0px;top:865.0px;width:1280.0px;height:29.9px;background:#ececec"></div>
<div class="b" style="left:365.0px;top:894.9px;width:1280.0px;height:29.9px;background:#ffffff"></div>
<div class="b" style="left:365.0px;top:924.8px;width:1280.0px;height:29.9px;background:#ececec"></div>
<div class="b" style="left:458.5px;top:775.0px;width:1.0px;height:160.0px;background:rgba(0,0,0,0.08)"></div>
<div class="b" style="left:894.5px;top:775.0px;width:1.0px;height:160.0px;background:rgba(0,0,0,0.08)"></div>
<div class="b" style="left:1019.5px;top:775.0px;width:1.0px;height:160.0px;background:rgba(0,0,0,0.08)"></div>
<div class="b" style="left:1144.5px;top:775.0px;width:1.0px;height:160.0px;background:rgba(0,0,0,0.08)"></div>
<div class="b" style="left:1269.5px;top:775.0px;width:1.0px;height:160.0px;background:rgba(0,0,0,0.08)"></div>
<div class="b" style="left:1394.5px;top:775.0px;width:1.0px;height:160.0px;background:rgba(0,0,0,0.08)"></div>
<div class="b" style="left:1519.5px;top:775.0px;width:1.0px;height:160.0px;background:rgba(0,0,0,0.08)"></div>
<div class="t" style="left:375.0px;top:785.0px;font-size:16px;line-height:16px;font-weight:400;color:#444444;">1</div>
<div class="t" style="left:468.5px;top:785.0px;font-size:16px;line-height:16px;font-weight:400;color:#444444;">Set Goal</div>
<div class="t" style="left:757.5px;width:400px;text-align:center;top:785.0px;font-size:16px;line-height:16px;font-weight:400;color:#2c8ccb;">1</div>
<div class="t" style="left:882.5px;width:400px;text-align:center;top:785.0px;font-size:16px;line-height:16px;font-weight:400;color:#2c8ccb;">1</div>
<div class="t" style="left:1007.5px;width:400px;text-align:center;top:785.0px;font-size:16px;line-height:16px;font-weight:400;color:#2c8ccb;">1</div>
<div class="t" style="left:1132.5px;width:400px;text-align:center;top:785.0px;font-size:16px;line-height:16px;font-weight:400;color:#2c8ccb;">1</div>
<div class="t" style="left:1257.5px;width:400px;text-align:center;top:785.0px;font-size:16px;line-height:16px;font-weight:400;color:#2c8ccb;">1</div>
<div class="t" style="left:1382.8px;width:400px;text-align:center;top:785.0px;font-size:16px;line-height:16px;font-weight:400;color:#2c8ccb;">1</div>
<div class="t" style="left:375.0px;top:814.9px;font-size:16px;line-height:16px;font-weight:400;color:#444444;">2</div>
<div class="t" style="left:468.5px;top:814.9px;font-size:16px;line-height:16px;font-weight:400;color:#444444;">Work Order Complete</div>
<div class="t" style="left:757.5px;width:400px;text-align:center;top:814.9px;font-size:16px;line-height:16px;font-weight:400;color:#444444;">0</div>
<div class="t" style="left:882.5px;width:400px;text-align:center;top:814.9px;font-size:16px;line-height:16px;font-weight:400;color:#444444;">0</div>
<div class="t" style="left:1007.5px;width:400px;text-align:center;top:814.9px;font-size:16px;line-height:16px;font-weight:400;color:#444444;">0</div>
<div class="t" style="left:1132.5px;width:400px;text-align:center;top:814.9px;font-size:16px;line-height:16px;font-weight:400;color:#444444;">0</div>
<div class="t" style="left:1257.5px;width:400px;text-align:center;top:814.9px;font-size:16px;line-height:16px;font-weight:400;color:#444444;">0</div>
<div class="t" style="left:1382.8px;width:400px;text-align:center;top:814.9px;font-size:16px;line-height:16px;font-weight:400;color:#444444;">0</div>
<div class="t" style="left:375.0px;top:844.7px;font-size:16px;line-height:16px;font-weight:400;color:#444444;">3</div>
<div class="t" style="left:468.5px;top:844.7px;font-size:16px;line-height:16px;font-weight:400;color:#444444;">Gather Content</div>
<div class="t" style="left:757.5px;width:400px;text-align:center;top:844.7px;font-size:16px;line-height:16px;font-weight:400;color:#444444;">0</div>
<div class="t" style="left:882.5px;width:400px;text-align:center;top:844.7px;font-size:16px;line-height:16px;font-weight:400;color:#444444;">0</div>
<div class="t" style="left:1007.5px;width:400px;text-align:center;top:844.7px;font-size:16px;line-height:16px;font-weight:400;color:#444444;">0</div>
<div class="t" style="left:1132.5px;width:400px;text-align:center;top:844.7px;font-size:16px;line-height:16px;font-weight:400;color:#444444;">0</div>
<div class="t" style="left:1257.5px;width:400px;text-align:center;top:844.7px;font-size:16px;line-height:16px;font-weight:400;color:#444444;">0</div>
<div class="t" style="left:1382.8px;width:400px;text-align:center;top:844.7px;font-size:16px;line-height:16px;font-weight:400;color:#444444;">0</div>
<div class="t" style="left:375.0px;top:874.5px;font-size:16px;line-height:16px;font-weight:400;color:#444444;">4</div>
<div class="t" style="left:468.5px;top:874.5px;font-size:16px;line-height:16px;font-weight:400;color:#444444;">Design Template/Content</div>
<div class="t" style="left:757.5px;width:400px;text-align:center;top:874.5px;font-size:16px;line-height:16px;font-weight:400;color:#444444;">0</div>
<div class="t" style="left:882.5px;width:400px;text-align:center;top:874.5px;font-size:16px;line-height:16px;font-weight:400;color:#444444;">0</div>
<div class="t" style="left:1007.5px;width:400px;text-align:center;top:874.5px;font-size:16px;line-height:16px;font-weight:400;color:#444444;">0</div>
<div class="t" style="left:1132.5px;width:400px;text-align:center;top:874.5px;font-size:16px;line-height:16px;font-weight:400;color:#444444;">0</div>
<div class="t" style="left:1257.5px;width:400px;text-align:center;top:874.5px;font-size:16px;line-height:16px;font-weight:400;color:#444444;">0</div>
<div class="t" style="left:1382.8px;width:400px;text-align:center;top:874.5px;font-size:16px;line-height:16px;font-weight:400;color:#444444;">0</div>
<div class="t" style="left:375.0px;top:904.4px;font-size:16px;line-height:16px;font-weight:400;color:#444444;">5</div>
<div class="t" style="left:468.5px;top:904.4px;font-size:16px;line-height:16px;font-weight:400;color:#444444;">Set up on Facebook</div>
<div class="t" style="left:757.5px;width:400px;text-align:center;top:904.4px;font-size:16px;line-height:16px;font-weight:400;color:#444444;">0</div>
<div class="t" style="left:882.5px;width:400px;text-align:center;top:904.4px;font-size:16px;line-height:16px;font-weight:400;color:#444444;">0</div>
<div class="t" style="left:1007.5px;width:400px;text-align:center;top:904.4px;font-size:16px;line-height:16px;font-weight:400;color:#444444;">0</div>
<div class="t" style="left:1132.5px;width:400px;text-align:center;top:904.4px;font-size:16px;line-height:16px;font-weight:400;color:#444444;">0</div>
<div class="t" style="left:1257.5px;width:400px;text-align:center;top:904.4px;font-size:16px;line-height:16px;font-weight:400;color:#444444;">0</div>
<div class="t" style="left:1382.8px;width:400px;text-align:center;top:904.4px;font-size:16px;line-height:16px;font-weight:400;color:#444444;">0</div>
</body></html>
